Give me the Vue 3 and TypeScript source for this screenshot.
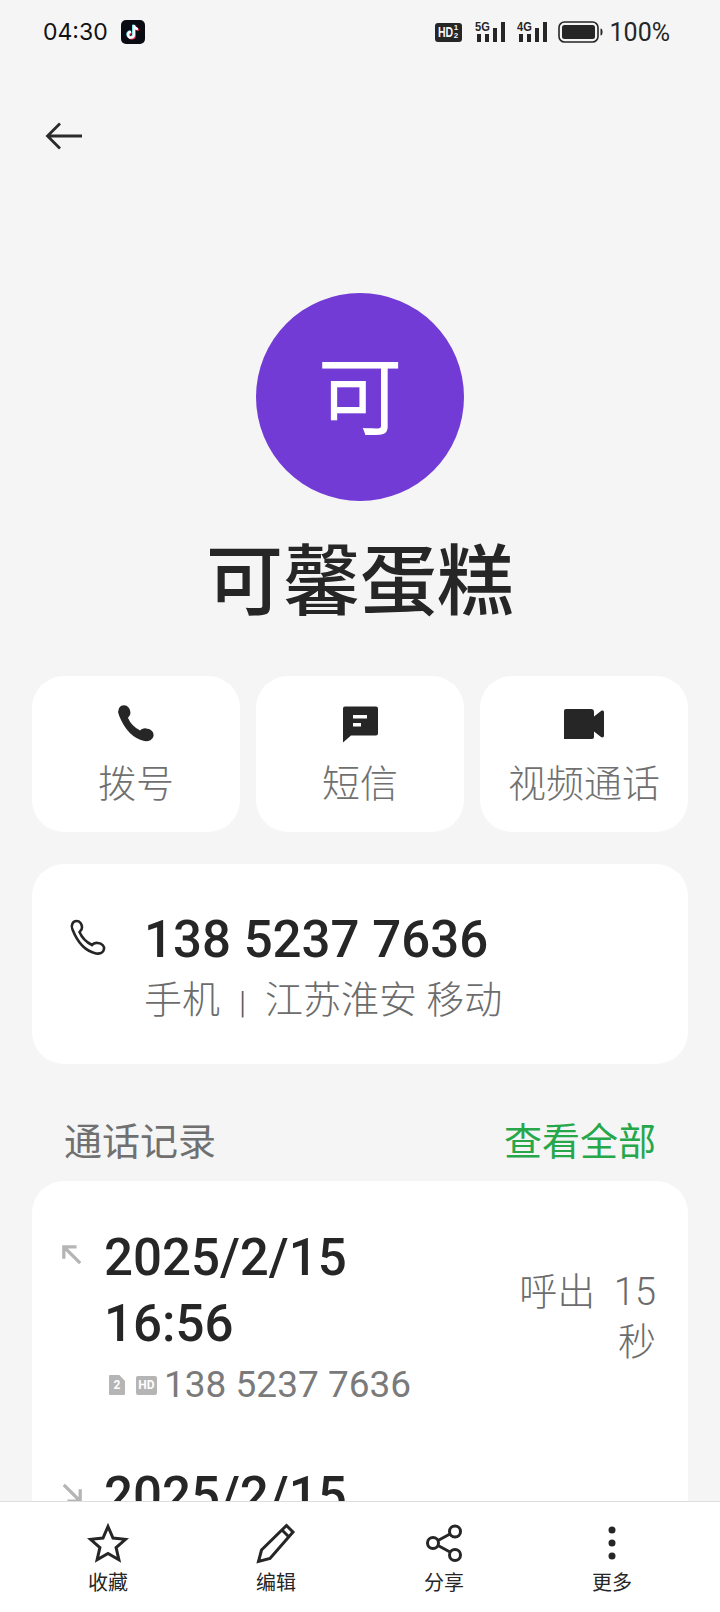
<script setup lang="ts">
const actions = [
  { label: '拨号', icon: 'phone' },
  { label: '短信', icon: 'sms' },
  { label: '视频通话', icon: 'video' },
]
const navItems = ['收藏', '编辑', '分享', '更多']
const handset = 'M3.5 10.5C1.5 6 4 2 7.5 2c3.500 0 5.500 3 5.500 6.500 0 2.500-2 3.500-2.500 4.500 2.500 6 6.500 10 12.500 13 1.500-2 3.500-2.500 6-2 4 .5 6.500 3 6 6-.5 3.500-4 5-8 4.500C16 32 8 22 3.500 10.500z'
</script>

<template>
  <div class="page">
    <header class="status">
      <div class="status-left">
        <span class="time">04:30</span>
        <svg class="tiktok" width="24" height="24" viewBox="0 0 24 24">
          <rect width="24" height="24" rx="5" fill="#0b0b14" />
          <path d="M12.9 5.2v9.6a2.9 2.9 0 1 1-2.9-2.9M12.9 5.2c.3 2.3 1.7 3.7 4 4" fill="none" stroke="#ff2a55" stroke-width="2.4" transform="translate(.9 .7)" />
          <path d="M12.9 5.2v9.6a2.9 2.9 0 1 1-2.9-2.9M12.9 5.2c.3 2.3 1.7 3.7 4 4" fill="none" stroke="#5fe6e6" stroke-width="2.4" transform="translate(-.7 -.5)" />
          <path d="M12.9 5.2v9.6a2.9 2.9 0 1 1-2.9-2.9M12.9 5.2c.3 2.3 1.7 3.7 4 4" fill="none" stroke="#fff" stroke-width="2.2" />
        </svg>
      </div>
      <div class="status-right">
        <span class="hd-badge"><b>HD</b><i><em>1</em><em>2</em></i></span>
        <span class="signal">
          <span class="net">5G</span>
          <svg width="32" height="20" viewBox="0 0 32 20"><rect x="2" y="12" width="4" height="8" /><rect x="10" y="12" width="4" height="8" /><rect x="18" y="6" width="4" height="14" /><rect x="26" y="0" width="4" height="20" /></svg>
        </span>
        <span class="signal">
          <span class="net">4G</span>
          <svg width="32" height="20" viewBox="0 0 32 20"><rect x="2" y="12" width="4" height="8" /><rect x="10" y="12" width="4" height="8" /><rect x="18" y="6" width="4" height="14" /><rect x="26" y="0" width="4" height="20" /></svg>
        </span>
        <svg class="battery" width="45" height="22" viewBox="0 0 45 22">
          <rect x="1" y="1" width="39" height="20" rx="5.5" fill="none" stroke="#262626" stroke-width="1.6" />
          <rect x="4" y="4" width="33" height="14" rx="2.5" fill="#262626" />
          <path d="M42.5 7.5c1.5.3 2 1 2 3.5s-.5 3.2-2 3.5z" fill="#262626" />
        </svg>
        <span class="pct">100%</span>
      </div>
    </header>

    <main class="content">
      <div class="back-row">
        <svg width="38" height="30" viewBox="0 0 38 30" fill="none" stroke="#2b2b2b" stroke-width="2.8">
          <path d="M37 15H3M15 2.5 2.5 15 15 27.5" />
        </svg>
      </div>

      <div class="avatar">可</div>
      <h1 class="name">可馨蛋糕</h1>

      <div class="actions">
        <div v-for="a in actions" :key="a.label" class="action">
          <svg v-if="a.icon === 'phone'" width="40" height="40" viewBox="0 0 38 38">
            <path :d="handset" fill="#262626" stroke="#262626" stroke-width="1.5" />
          </svg>
          <svg v-else-if="a.icon === 'sms'" width="40" height="40" viewBox="0 0 40 40">
            <path d="M3 4.500a2 2 0 0 1 2-2h31a2 2 0 0 1 2 2v25a2 2 0 0 1-2 2H11l-8 7z" fill="#262626" />
            <rect x="13" y="11" width="14" height="3.500" fill="#fff" />
            <rect x="13" y="19" width="8" height="3.500" fill="#fff" />
          </svg>
          <svg v-else width="40" height="40" viewBox="0 0 40 40">
            <path d="M0 7a2 2 0 0 1 2-2h25a3 3 0 0 1 3 3v4.500l7-5.500c1.500-1 3-.5 3 1.500v23c0 2-1.500 2.500-3 1.500l-7-5.500V33a2 2 0 0 1-2 2H0z" fill="#262626" />
          </svg>
          <span class="action-label">{{ a.label }}</span>
        </div>
      </div>

      <section class="phone-card">
        <svg class="phone-line" width="38" height="38" viewBox="0 0 38 38" fill="none" stroke="#262626" stroke-width="2.600">
          <path :d="handset" />
        </svg>
        <div>
          <div class="number">138 5237 7636</div>
          <div class="place">手机<span class="sep">|</span>江苏淮安 移动</div>
        </div>
      </section>

      <div class="section-head">
        <span class="section-title">通话记录</span>
        <span class="section-link">查看全部</span>
      </div>

      <section class="log-card">
        <div class="log-row">
          <svg class="dir" width="20" height="20" viewBox="0 0 22 22" fill="none" stroke="#b5b5b5" stroke-width="3.600">
            <path d="M20 20 3 3M2 15V2h14" />
          </svg>
          <div class="log-main">
            <div class="log-time">2025/2/15<br />16:56</div>
            <div class="log-sub">
              <span class="sim">2</span>
              <span class="hd-mini">HD</span>
              <span class="log-number">138 5237 7636</span>
            </div>
          </div>
          <div class="log-type">呼出&nbsp;&nbsp;15<br />秒</div>
        </div>
        <div class="log-row second">
          <svg class="dir" width="20" height="20" viewBox="0 0 22 22" fill="none" stroke="#b5b5b5" stroke-width="3.600">
            <path d="M2 2 19 19M20 7v13H6" />
          </svg>
          <div class="log-main">
            <div class="log-time">2025/2/15</div>
          </div>
        </div>
      </section>
    </main>

    <nav class="bottom">
      <div v-for="(item, i) in navItems" :key="item" class="nav-item">
        <svg width="42" height="42" viewBox="0 0 42 42" fill="none" stroke="#262626" stroke-width="3">
          <path v-if="i === 0" d="M21 4.500 26 16l12.500 1.300-9.400 8.200 2.800 12.300L21 31.400l-10.900 6.400 2.800-12.300-9.400-8.200L16 16z" />
          <template v-else-if="i === 1">
            <path d="M31.500 3.500 38 10 15 36.500 3.500 39.500l3-11.500z" />
            <path d="M27.500 8.500 34 15" />
          </template>
          <template v-else-if="i === 2">
            <circle cx="32" cy="9.500" r="5.500" />
            <circle cx="10" cy="21" r="5.500" />
            <circle cx="32" cy="33" r="5.500" />
            <path d="M15 18.500 27 12M15 23.500 27 30" />
          </template>
          <template v-else>
            <circle cx="21" cy="8" r="3.500" fill="#262626" stroke="none" />
            <circle cx="21" cy="21" r="3.500" fill="#262626" stroke="none" />
            <circle cx="21" cy="34" r="3.500" fill="#262626" stroke="none" />
          </template>
        </svg>
        <span class="nav-label">{{ item }}</span>
      </div>
    </nav>
  </div>
</template>

<style>
html, body { margin: 0; background: #f5f5f5; }
</style>

<style scoped>
.page {
  width: 720px;
  height: 1612px;
  display: flex;
  flex-direction: column;
  overflow: hidden;
  background: #f5f5f5;
  font-family: Roboto, "Noto Sans CJK SC", sans-serif;
  color: #262626;
}
.status {
  flex: none;
  height: 64px;
  display: flex;
  justify-content: space-between;
  align-items: center;
  padding: 0 50px 0 43px;
  color: #111;
}
.status-left { display: flex; align-items: center; gap: 13px; }
.time { font-size: 23px; font-family: Inter, Roboto, sans-serif; }
.status-right { display: flex; align-items: center; }
.hd-badge {
  width: 27px; height: 19px; margin-right: 3px; background: #262626; border-radius: 3px; color: #f5f5f5;
  display: flex; align-items: center; justify-content: center; gap: 1px; font-family: "Liberation Sans", sans-serif;
}
.hd-badge b { font-size: 14px; line-height: 1; width: 15px; transform: scaleX(.75); transform-origin: left; white-space: nowrap; }
.hd-badge i { display: flex; flex-direction: column; font-style: normal; font-size: 8px; line-height: 8px; font-weight: 700; }
.hd-badge em { font-style: normal; }
.signal { position: relative; width: 32px; height: 20px; margin-left: 10px; fill: #262626; display: block; }
.signal svg { display: block; }
.net { position: absolute; left: 0; top: -1px; font-size: 13px; font-weight: 700; line-height: 11px; color: #262626; font-family: "Liberation Sans", sans-serif; transform: scaleX(.85); transform-origin: left; }
.battery { margin-left: 9px; }
.pct { margin-left: 7px; font-size: 25px; color: #262626; }
.content { flex: 1; min-height: 0; overflow: hidden; }
.back-row { height: 68px; margin-top: 38px; padding: 0 0 0 45px; display: flex; align-items: center; }
.avatar {
  width: 208px; height: 208px; margin: 123px auto 0; border-radius: 50%; box-sizing: border-box; padding-bottom: 14px;
  background: #733bd6; color: #fff; font-size: 85px; display: flex; align-items: center; justify-content: center;
}
.name { margin: 26px 0 0; text-align: center; font-size: 77px; line-height: 112px; font-weight: 500; color: #262626; }
.actions { display: flex; gap: 16px; padding: 0 32px; margin-top: 37px; }
.action {
  flex: 1; height: 156px; background: #fff; border-radius: 32px; box-sizing: border-box; padding-top: 28px;
  display: flex; flex-direction: column; align-items: center;
}
.action-label { margin-top: 12px; font-size: 38px; line-height: 56px; color: #707070; font-weight: 300; }
.phone-card {
  margin: 32px 32px 0; height: 200px; box-sizing: border-box; background: #fff; border-radius: 32px;
  display: flex; padding: 46px 0 0 37px; gap: 37px;
}
.phone-line { margin-top: 9px; }
.number { font-size: 51px; line-height: 60px; font-weight: 500; color: #262626; }
.place { margin-top: 2px; font-size: 38px; line-height: 56px; color: #6c6c6c; font-weight: 300; }
.sep { margin: 0 19px; font-size: 32px; color: #5a5a5a; }
.section-head { display: flex; justify-content: space-between; padding: 0 64px; margin-top: 48px; font-size: 38px; line-height: 60px; }
.section-title { color: #707070; }
.section-link { color: #25a74a; }
.log-card { margin: 9px 32px 0; background: #fff; border-radius: 32px 32px 0 0; padding: 44px 32px 0 30px; }
.log-row { display: flex; }
.log-row.second { margin-top: 53px; }
.dir { flex: none; margin-top: 20px; }
.log-main { flex: 1; margin-left: 22px; }
.log-time { font-size: 51px; line-height: 66px; font-weight: 500; color: #262626; }
.log-sub { display: flex; align-items: center; margin-top: 3px; }
.sim { margin-left: 5px; width: 16px; height: 20px; background: #b5b5b5; color: #fff; font-size: 12px; font-weight: 700; border-radius: 1px; display: flex; align-items: center; justify-content: center; clip-path: polygon(0 0, 65% 0, 100% 30%, 100% 100%, 0 100%); }
.hd-mini { margin-left: 11px; width: 21px; height: 19px; background: #b5b5b5; color: #fff; font-size: 12px; font-weight: 700; border-radius: 2px; display: flex; align-items: center; justify-content: center; }
.log-number { margin-left: 7px; font-size: 37px; line-height: 50px; color: #7a7a7a; font-weight: 400; }
.log-type { text-align: right; font-size: 38px; line-height: 50px; color: #6c6c6c; font-weight: 300; margin-top: 42px; white-space: nowrap; }
.bottom {
  flex: none; height: 111px; box-sizing: border-box; background: #fff; border-top: 1px solid #dedede;
  display: flex; padding: 20px 0 0 24px;
}
.nav-item { width: 168px; display: flex; flex-direction: column; align-items: center; }
.nav-label { font-size: 20px; line-height: 32px; margin-top: 3px; color: #262626; }
</style>
